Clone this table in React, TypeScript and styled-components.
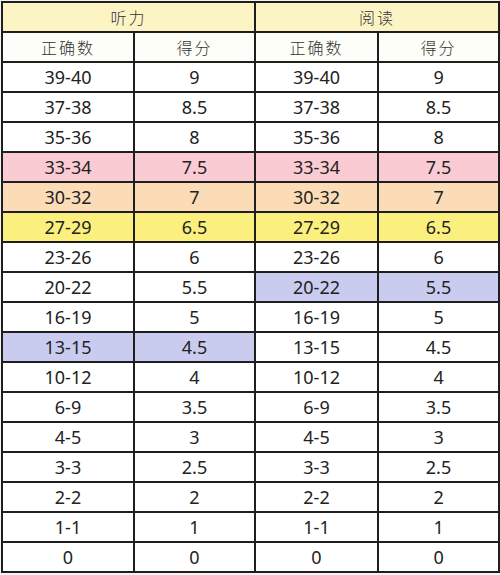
import React from "react";
import styled, { createGlobalStyle } from "styled-components";

const Global = createGlobalStyle`
  html, body { margin: 0; padding: 0; background: #f4f4f4; }
  body { font-family: "Noto Sans", "Noto Sans CJK SC", sans-serif; }
`;

type Tone = "none" | "pink" | "orange" | "yellow" | "blue" | "head" | "sub";

const toneColor: Record<Tone, string> = {
  none: "#ffffff",
  pink: "#fbcbd3",
  orange: "#fbdcb6",
  yellow: "#fbef7e",
  blue: "#c9ccef",
  head: "#fdf4c6",
  sub: "#fefef8",
};

const Table = styled.table`
  border-collapse: collapse;
  table-layout: fixed;
  width: 497px;
  margin: 1px 0 0 1px;
  background: #fff;
`;

const Cell = styled.td<{ $tone: Tone }>`
  height: 28px;
  padding: 0;
  border: 2px solid #1e1e1e;
  background: ${(p) => toneColor[p.$tone]};
  color: #222;
  text-align: center;
  vertical-align: middle;
  font-family: "Noto Sans", "Noto Sans CJK SC", sans-serif;
  font-size: 18px;
  line-height: 26px;
`;

const HeadCell = styled(Cell)`
  font-family: "Noto Sans CJK SC", sans-serif;
  font-size: 16px;
  font-weight: 300;
  letter-spacing: 2px;
  color: #333;
`;

type Row = { range: string; score: string; left: Tone; right: Tone };

const rows: Row[] = [
  { range: "39-40", score: "9", left: "none", right: "none" },
  { range: "37-38", score: "8.5", left: "none", right: "none" },
  { range: "35-36", score: "8", left: "none", right: "none" },
  { range: "33-34", score: "7.5", left: "pink", right: "pink" },
  { range: "30-32", score: "7", left: "orange", right: "orange" },
  { range: "27-29", score: "6.5", left: "yellow", right: "yellow" },
  { range: "23-26", score: "6", left: "none", right: "none" },
  { range: "20-22", score: "5.5", left: "none", right: "blue" },
  { range: "16-19", score: "5", left: "none", right: "none" },
  { range: "13-15", score: "4.5", left: "blue", right: "none" },
  { range: "10-12", score: "4", left: "none", right: "none" },
  { range: "6-9", score: "3.5", left: "none", right: "none" },
  { range: "4-5", score: "3", left: "none", right: "none" },
  { range: "3-3", score: "2.5", left: "none", right: "none" },
  { range: "2-2", score: "2", left: "none", right: "none" },
  { range: "1-1", score: "1", left: "none", right: "none" },
  { range: "0", score: "0", left: "none", right: "none" },
];

export default function App() {
  return (
    <>
      <Global />
      <Table>
        <colgroup>
          <col style={{ width: 132 }} />
          <col style={{ width: 121 }} />
          <col style={{ width: 123 }} />
          <col style={{ width: 121 }} />
        </colgroup>
        <tbody>
          <tr>
            <HeadCell $tone="head" colSpan={2}>听力</HeadCell>
            <HeadCell $tone="head" colSpan={2}>阅读</HeadCell>
          </tr>
          <tr>
            <HeadCell $tone="sub">正确数</HeadCell>
            <HeadCell $tone="sub">得分</HeadCell>
            <HeadCell $tone="sub">正确数</HeadCell>
            <HeadCell $tone="sub">得分</HeadCell>
          </tr>
          {rows.map((r) => (
            <tr key={r.range}>
              <Cell $tone={r.left}>{r.range}</Cell>
              <Cell $tone={r.left}>{r.score}</Cell>
              <Cell $tone={r.right}>{r.range}</Cell>
              <Cell $tone={r.right}>{r.score}</Cell>
            </tr>
          ))}
        </tbody>
      </Table>
    </>
  );
}
